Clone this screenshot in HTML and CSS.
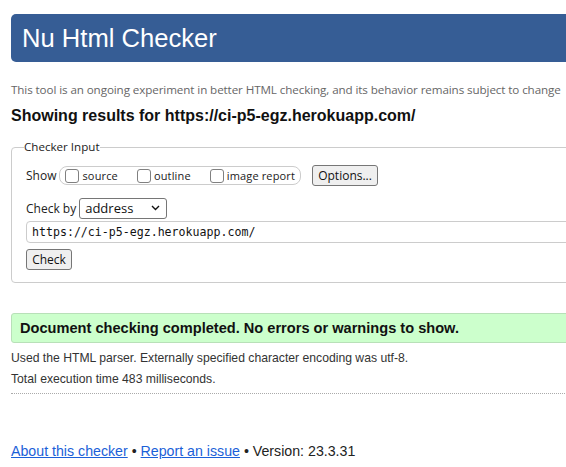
FILE: index.html
```html
<!DOCTYPE html>
<html lang="en">
<head>
<meta charset="utf-8">
<title>Nu Html Checker</title>
<link rel="stylesheet" href="styles.css">
</head>
<body>
<div class="page">
  <h1 class="banner">Nu Html Checker</h1>
  <p class="tagline">This tool is an ongoing experiment in better HTML checking, and its behavior remains subject to change</p>
  <h2 class="results-title">Showing results for https://ci-p5-egz.herokuapp.com/</h2>
  <fieldset class="checker">
    <legend class="checker-legend">Checker Input</legend>
    <div class="row show-row">
      <span class="row-label">Show</span>
      <div class="show-group">
        <label class="opt"><span class="box"></span>source</label>
        <label class="opt"><span class="box"></span>outline</label>
        <label class="opt"><span class="box"></span>image report</label>
      </div>
      <button class="btn options-btn" type="button">Options...</button>
    </div>
    <div class="row checkby-row">
      <span class="row-label">Check by</span>
      <div class="select">
        <span class="select-value">address</span>
        <svg class="chev" width="9" height="6" viewBox="0 0 9 6"><path d="M1 1 L4.5 4.5 L8 1" fill="none" stroke="#111" stroke-width="1.4"/></svg>
      </div>
    </div>
    <div class="url-input">https://ci-p5-egz.herokuapp.com/</div>
    <button class="btn check-btn" type="button">Check</button>
  </fieldset>
  <div class="success">Document checking completed. No errors or warnings to show.</div>
  <div class="info-block">
    <p class="info">Used the HTML parser. Externally specified character encoding was utf-8.</p>
    <p class="info">Total execution time 483 milliseconds.</p>
  </div>
  <hr class="dotted">
  <p class="footer"><a href="#">About this checker</a> • <a href="#">Report an issue</a> • Version: 23.3.31</p>
</div>
</body>
</html>
```
FILE: styles.css
```css
html, body {
  margin: 0;
  padding: 0;
  overflow: hidden;
  background: #fff;
}
body {
  font-family: "Liberation Sans", Arial, sans-serif;
  color: #222;
}
.page {
  width: 640px;
  padding: 14px 0 0 11px;
}
.banner {
  margin: 0;
  height: 48px;
  box-sizing: border-box;
  background: #365d95;
  border-radius: 5px;
  color: #fff;
  font-weight: normal;
  font-size: 25.6px;
  line-height: 48px;
  padding-left: 11px;
}
.tagline {
  margin: 20px 0 0 0;
  font-family: "Open Sans", "Noto Sans", sans-serif;
  font-size: 11.65px;
  color: #666;
  line-height: 16px;
  letter-spacing: -0.1px;
}
.results-title {
  margin: 8px 0 0 0;
  font-size: 16px;
  line-height: 20px;
  font-weight: bold;
  color: #111;
}
.checker {
  margin: 14px 0 0 0;
  border: 1px solid #ccc;
  border-radius: 4px;
  padding: 10px 14px 10px 14px;
  height: 143px;
  box-sizing: border-box;
  font-family: "Open Sans", "Noto Sans", sans-serif;
  font-size: 12px;
  color: #222;
}
.checker-legend {
  padding: 0;
  margin-left: -2px;
  font-size: 11.6px;
  line-height: 14px;
}
.row {
  display: flex;
  align-items: center;
}
.row-label {
  margin-right: 3px;
}
.show-row {
  height: 23px;
}
.show-group {
  display: flex;
  align-items: center;
  gap: 19px;
  border: 1px solid #ccc;
  border-radius: 8px;
  height: 19px;
  box-sizing: border-box;
  padding: 0 5px 0 5px;
  font-size: 11px;
  letter-spacing: 0.15px;
}
.opt {
  display: flex;
  align-items: center;
  gap: 3px;
}
.box {
  width: 14px;
  height: 14px;
  border: 1.5px solid #808080;
  border-radius: 3px;
  box-sizing: border-box;
  background: #fff;
}
.btn {
  font-family: "Open Sans", "Noto Sans", sans-serif;
  font-size: 12px;
  color: #111;
  background: #efefef;
  border: 1px solid #767676;
  border-radius: 3px;
  padding: 0 5px;
  height: 21px;
}
.options-btn {
  margin-left: 11px;
  width: 66px;
}
.checkby-row {
  margin-top: 10px;
  height: 22px;
}
.select {
  display: flex;
  align-items: center;
  justify-content: space-between;
  width: 88px;
  height: 21px;
  box-sizing: border-box;
  border: 1px solid #767676;
  border-radius: 3px;
  padding: 0 6px 0 5px;
  font-size: 13px;
  color: #111;
}
.chev {
  display: block;
}
.url-input {
  margin-top: 2px;
  height: 22px;
  box-sizing: border-box;
  border: 1px solid #ccc;
  border-radius: 4px;
  padding: 0 5px;
  font-family: "DejaVu Sans Mono", "Liberation Mono", monospace;
  font-size: 11.6px;
  line-height: 20px;
  width: 560px;
  color: #111;
}
.check-btn {
  margin-top: 6px;
  width: 46px;
  padding: 0;
}
.success {
  margin-top: 30px;
  height: 30px;
  box-sizing: border-box;
  background: #ccffcc;
  border: 1px solid #b8e0b8;
  border-radius: 3px;
  padding-left: 8px;
  font-weight: bold;
  font-size: 14.6px;
  line-height: 28px;
  color: #111;
}
.info-block {
  margin-top: 5px;
}
.info {
  margin: 0;
  font-size: 12.2px;
  line-height: 21px;
  color: #333;
}
.dotted {
  margin: 3px 0 0 0;
  border: 0;
  border-top: 1px dotted #aaa;
  height: 0;
}
.footer {
  margin: 48px 0 0 0;
  font-size: 14.2px;
  line-height: 18px;
  color: #222;
}
.footer a {
  color: #1b5fd8;
}
```
